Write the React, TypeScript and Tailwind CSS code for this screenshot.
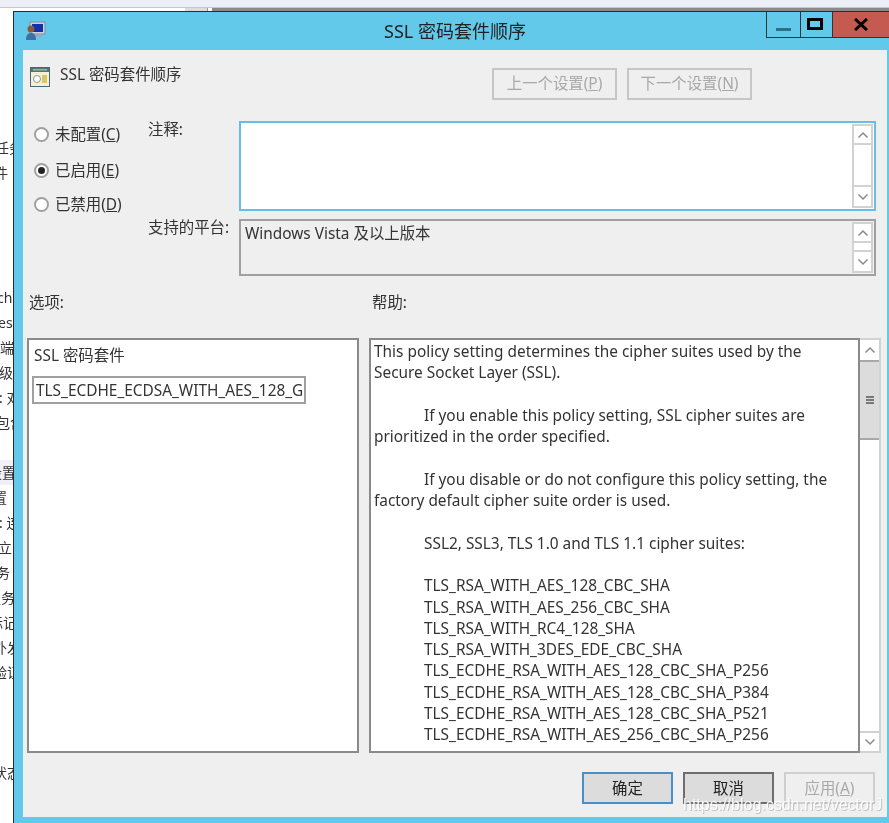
import React from "react";

const FONT = '"Noto Sans","Noto Sans CJK SC",sans-serif';

const bgRows: { t: string; c: string }[] = [
  { t: "任务", c: "ml-[-5px]" },
  { t: "件", c: "ml-[-6px]" },
  { t: "", c: "" },
  { t: "", c: "" },
  { t: "", c: "" },
  { t: "", c: "" },
  { t: "ch", c: "ml-[-3px]" },
  { t: "es", c: "ml-[-2px]" },
  { t: "端", c: "ml-[0px]" },
  { t: "级", c: "ml-[-1px]" },
  { t: ": 对", c: "ml-[-1px]" },
  { t: "包含", c: "ml-[-4px]" },
  { t: "", c: "" },
  { t: "设置", c: "ml-[-12px] bg-[#f0f0f8]" },
  { t: "置", c: "ml-[-7px]" },
  { t: ": 连", c: "ml-[-1px]" },
  { t: "立", c: "ml-[-2px]" },
  { t: "务", c: "ml-[-4px]" },
  { t: "服务", c: "ml-[-13px]" },
  { t: "标记", c: "ml-[-11px]" },
  { t: "外发", c: "ml-[-7px]" },
  { t: "验证", c: "ml-[-7px]" },
  { t: "", c: "" },
  { t: "", c: "" },
  { t: "", c: "" },
  { t: "状态", c: "ml-[-7px]" },
];

function Chevron({ up }: { up?: boolean }) {
  return (
    <svg width="12" height="8" viewBox="0 0 12 8" fill="none" stroke="#8a8a8a" strokeWidth="1.5">
      <path d={up ? "M1.5 6.5 6 2l4.500 4.500" : "M1.500 1.500 6 6l4.500-4.500"} />
    </svg>
  );
}

function BoxScroll({ disabled }: { disabled?: boolean }) {
  return (
    <div className={`flex flex-col w-[21px] h-full border-2 border-[#d2d2d2] ${disabled ? "bg-[#f2f2f2]" : "bg-white"}`}>
      <div className="h-[19px] flex items-center justify-center border-b-2 border-[#d2d2d2]"><Chevron up /></div>
      <div className="flex-1" />
      <div className="h-[21px] flex items-center justify-center border-t-2 border-[#d2d2d2]"><Chevron /></div>
    </div>
  );
}

function Radio({ checked, label, u }: { checked?: boolean; label: string; u: string }) {
  return (
    <div className="flex items-center h-[20px]">
      <span className="w-[15px] h-[15px] rounded-full border-2 border-[#a0a0a0] bg-white flex items-center justify-center shrink-0">
        {checked && <span className="w-[7px] h-[7px] rounded-full bg-[#222]" />}
      </span>
      <span className="ml-[6px] mt-[2px] text-[15.400px] text-[#333] leading-[20px]">{label}(<span className="underline">{u}</span>)</span>
    </div>
  );
}

function TopBtn({ label, u }: { label: string; u: string }) {
  return (
    <div className="w-[125px] h-[32px] border-2 border-[#c6c6c6] flex items-center justify-center text-[15.400px] text-[#a8a8a8]">
      {label}(<span className="underline">{u}</span>)
    </div>
  );
}

function BottomBtn({ label, kind }: { label: React.ReactNode; kind: "primary" | "normal" | "disabled" }) {
  const cls =
    kind === "primary"
      ? "border-[#4a90c8] bg-[#dcdcdc] text-[#222]"
      : kind === "normal"
      ? "border-[#6e6e6e] bg-[#dcdcdc] text-[#222]"
      : "border-[#cfcfcf] bg-[#efefef] text-[#a8a8a8]";
  return <div className={`w-[91px] h-[32px] pt-[1px] border-2 flex items-center justify-center text-[15.400px] ${cls}`}>{label}</div>;
}

const helpLines: (string | [string])[] = [
  "This policy setting determines the cipher suites used by the",
  "Secure Socket Layer (SSL).",
  "",
  ["If you enable this policy setting, SSL cipher suites are"],
  "prioritized in the order specified.",
  "",
  ["If you disable or do not configure this policy setting, the"],
  "factory default cipher suite order is used.",
  "",
  ["SSL2, SSL3, TLS 1.0 and TLS 1.1 cipher suites:"],
  "",
  ["TLS_RSA_WITH_AES_128_CBC_SHA"],
  ["TLS_RSA_WITH_AES_256_CBC_SHA"],
  ["TLS_RSA_WITH_RC4_128_SHA"],
  ["TLS_RSA_WITH_3DES_EDE_CBC_SHA"],
  ["TLS_ECDHE_RSA_WITH_AES_128_CBC_SHA_P256"],
  ["TLS_ECDHE_RSA_WITH_AES_128_CBC_SHA_P384"],
  ["TLS_ECDHE_RSA_WITH_AES_128_CBC_SHA_P521"],
  ["TLS_ECDHE_RSA_WITH_AES_256_CBC_SHA_P256"],
];

export default function App() {
  return (
    <div className="relative w-[889px] h-[823px] overflow-hidden bg-white blur-[0.35px]" style={{ fontFamily: FONT }}>
      {/* desktop behind */}
      <div className="h-[8px] bg-[#eceef8] border-b border-[#c8c8c8]" />
      <div className="flex h-[3px]">
        <div className="w-[185px]" />
        <div className="w-[23px] bg-[#dcdcdc] border-r border-[#999]" />
        <div className="w-[4px]" />
        <div className="flex-1 bg-[#8a8a8a]" />
      </div>
      <div className="w-[13px] overflow-hidden pt-[124px] flex flex-col text-[14px] text-[#333]">
        {bgRows.map((r, i) => (
          <div key={i} className="h-[25px] leading-[25px] whitespace-nowrap">
            <div className={r.c}>{r.t}</div>
          </div>
        ))}
      </div>

      {/* dialog window */}
      <div className="absolute left-[13px] top-[11px] w-[876px] h-[812px] bg-[#63c9ea] border-l border-t border-[#2a2a2a] flex flex-col">
        <div className="relative h-[38px] shrink-0">
          <svg className="absolute left-[11px] top-[9px]" width="21" height="20" viewBox="0 0 21 20">
            <rect x="5" y="1" width="15" height="12" fill="#c6d4e4" stroke="#7d8aa0" />
            <rect x="7" y="3" width="11" height="8" fill="#1430a8" />
            <rect x="10" y="13" width="7" height="3" fill="#9aa8b8" />
            <circle cx="6" cy="8" r="3.500" fill="#8a5a3a" />
            <path d="M1 19c0-5 2-7 5-7s5 2 5 7z" fill="#3f6fa8" />
          </svg>
          <div className="w-full text-center text-[18px] leading-[38px] text-[#222] pl-[7px]">SSL 密码套件顺序</div>
          <div className="absolute right-0 top-0 flex h-[26px] border-b border-[#333]">
            <div className="w-[34px] border-l border-[#333] flex items-end justify-center pb-[6px]">
              <div className="w-[15px] h-[3px] bg-[#2e6f88]" />
            </div>
            <div className="w-[32px] border-l border-[#333] flex items-center justify-center pb-[1px] pr-[3px]">
              <div className="w-[16px] h-[12px] border-[3px] border-black" />
            </div>
            <div className="w-[57px] bg-[#c45a50] border-l border-[#333] flex items-center justify-center">
              <svg width="14" height="13" viewBox="0 0 14 13" stroke="#000" strokeWidth="3" fill="none">
                <path d="M1 1l12 11M13 1 1 12" />
              </svg>
            </div>
          </div>
        </div>

        <div className="ml-[9px] mr-[2px] mb-[6px] flex-1 bg-[#efefef] flex flex-col text-[#333]">
          {/* header */}
          <div className="flex items-start pt-[18px] h-[71px] pl-[7px]">
            <svg className="mt-[-1px]" width="20" height="20" viewBox="0 0 20 20">
              <rect x="0.500" y="0.500" width="19" height="19" fill="#f2f0dc" stroke="#4a6a6a" />
              <rect x="1" y="1" width="18" height="4" fill="#4a7a78" />
              <rect x="3" y="2" width="14" height="1.500" fill="#b0b070" />
              <circle cx="7" cy="12" r="3.500" fill="#fff" stroke="#8a9a8a" />
              <rect x="12" y="8" width="5" height="8" fill="#d8c860" />
            </svg>
            <div className="ml-[10px] w-[121px] text-[15.400px] leading-[20px] mt-[-3px] text-[#333] whitespace-nowrap">SSL 密码套件顺序</div>
            <div className="flex gap-[10px] ml-[311px]">
              <TopBtn label="上一个设置" u="P" />
              <TopBtn label="下一个设置" u="N" />
            </div>
          </div>

          {/* top section */}
          <div className="flex pl-[11px] pr-[11px]">
            <div className="w-[114px] flex flex-col pt-[3px] gap-[16px]">
              <Radio label="未配置" u="C" />
              <Radio checked label="已启用" u="E" />
              <div className="mt-[-2px]"><Radio label="已禁用" u="D" /></div>
            </div>
            <div className="flex-1 flex flex-col gap-[8px]">
              <div className="flex h-[90px]">
                <div className="w-[91px] text-[15.400px] leading-[20px] mt-[-1px]">注释:</div>
                <div className="flex-1 border-2 border-[#68bde8] bg-white flex justify-end p-[1px]">
                  <BoxScroll />
                </div>
              </div>
              <div className="flex h-[57px]">
                <div className="w-[91px] text-[15.400px] leading-[20px] mt-[-1px]">支持的平台:</div>
                <div className="flex-1 border-2 border-[#a0a0a0] bg-[#efefef] flex justify-between p-[1px]">
                  <div className="pl-[3px] pt-[2px] text-[15.400px] leading-[20px]">Windows Vista 及以上版本</div>
                  <BoxScroll />
                </div>
              </div>
            </div>
          </div>

          {/* labels */}
          <div className="flex h-[62px] pt-[17px] text-[15.400px] leading-[20px] pl-[6px]">
            <div className="w-[343px]">选项:</div>
            <div>帮助:</div>
          </div>

          {/* panels */}
          <div className="flex pl-[4px] pr-[6px] h-[415px]">
            <div className="w-[332px] border-2 border-[#8a8a8a] bg-white pl-[3px] pt-[6px]">
              <div className="text-[15.400px] leading-[20px] pl-[2px]">SSL 密码套件</div>
              <div className="mt-[10px] w-[274px] h-[28px] border-2 border-[#a0a0a0] overflow-hidden whitespace-nowrap text-[15.400px] leading-[26px] pl-[2px] pr-[1px]">
                <div className="overflow-hidden">TLS_ECDHE_ECDSA_WITH_AES_128_GCM</div>
              </div>
            </div>
            <div className="w-[491px] ml-[10px] border-2 border-[#8a8a8a] bg-white overflow-hidden pl-[3px] pt-[1px]">
              {helpLines.map((l, i) =>
                typeof l === "string" ? (
                  <div key={i} className="h-[21.300px] leading-[21.300px] text-[15.400px] whitespace-nowrap">{l}</div>
                ) : (
                  <div key={i} className="h-[21.300px] leading-[21.300px] text-[15.400px] whitespace-nowrap pl-[50px]">{l[0]}</div>
                )
              )}
            </div>
            <div className="w-[21px] border-2 border-l-0 border-[#d2d2d2] bg-white flex flex-col">
              <div className="h-[20px] flex items-center justify-center"><Chevron up /></div>
              <div className="h-[80px] bg-[#dcdcdc] border-y-2 border-[#a8a8a8] flex flex-col items-center justify-center gap-[1px]">
                <div className="w-[8px] h-[2px] bg-[#777]" />
                <div className="w-[8px] h-[2px] bg-[#777]" />
                <div className="w-[8px] h-[2px] bg-[#777]" />
              </div>
              <div className="flex-1" />
              <div className="h-[20px] flex items-center justify-center border-t-2 border-[#d2d2d2]"><Chevron /></div>
            </div>
          </div>

          {/* bottom buttons */}
          <div className="flex justify-end gap-[10px] pt-[19px] pr-[12px]">
            <BottomBtn kind="primary" label="确定" />
            <BottomBtn kind="normal" label="取消" />
            <BottomBtn kind="disabled" label={<>应用(<span className="underline">A</span>)</>} />
          </div>
        </div>
      </div>

      {/* watermark */}
      <div
        className="absolute left-[683px] top-[793px] text-[16px] leading-[24px] text-white/90 whitespace-nowrap [text-shadow:1px_1px_0_rgba(150,150,150,0.5)]"
        style={{ fontFamily: '"Liberation Sans",sans-serif' }}
      >
        https://blog.csdn.net/vectorJ
      </div>
    </div>
  );
}
